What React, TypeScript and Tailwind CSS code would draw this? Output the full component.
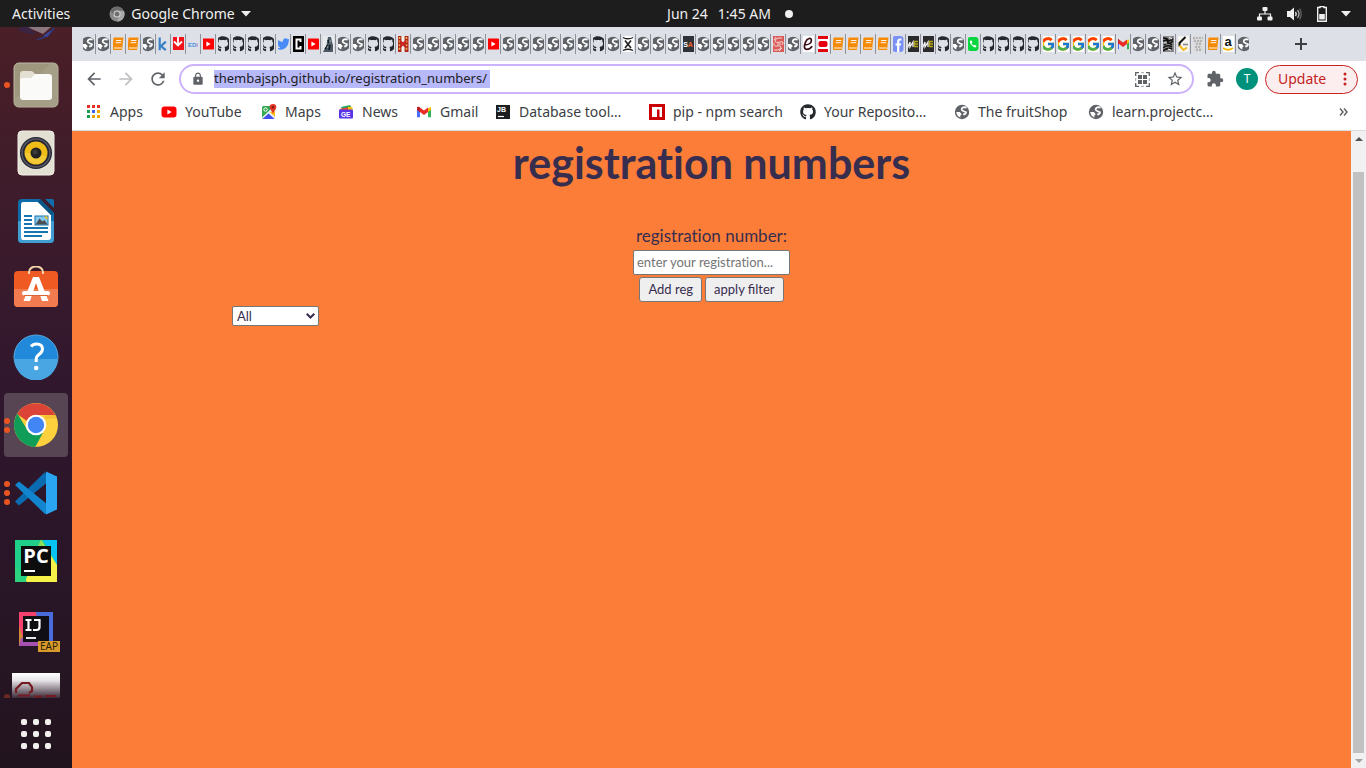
import type { ReactNode } from "react";
import {
  MdArrowBack,
  MdArrowForward,
  MdExtension,
  MdLock,
  MdRefresh,
  MdStarBorder,
} from "react-icons/md";
import { FaGithub, FaTwitter } from "react-icons/fa";
import { FcGoogle } from "react-icons/fc";

/* ---------- 16px site icons ---------- */

function Svg16({ children }: { children: ReactNode }) {
  return (
    <svg width="16" height="16" viewBox="0 0 16 16" className="shrink-0" aria-hidden="true">
      {children}
    </svg>
  );
}

const Globe = () => (
  <Svg16>
    <circle cx="8" cy="8" r="7.2" fill="#5f6368" />
    <path d="M12.6 3.6 10.200 3.200Q8 3.400 7.600 5.200 7.700 6.800 9.600 7.200L12 8.300Q11.800 10.300 9.200 10.400" fill="none" stroke="#fff" strokeWidth="1.700" />
    <path d="M2.200 8h3.600l2 2.300-1.600 1.500.3 1.700Q3 12.500 2.200 8z" fill="#fff" />
  </Svg16>
);
const Github = () => <FaGithub className="size-4 shrink-0 text-[#24292e]" />;
const Google = () => <FcGoogle className="size-4 shrink-0 bg-white" />;

const Book = () => (
  <Svg16>
    <path d="M4 1.500h9.500l-1.200 10H2.600L3.400 2.500z" fill="#f58a07" />
    <path d="M2.600 11h9.800l-.3 3H4q-2-.5-1.400-3z" fill="#f58a07" />
    <path d="M6 4.500h5.500M5.700 6.700h5.500M4 12h8" stroke="#fff" strokeWidth="0.900" />
  </Svg16>
);
const Youtube = () => (
  <Svg16>
    <rect x="0.5" y="2.6" width="15" height="11" rx="3" fill="#f00" />
    <path d="M6.4 5.5v5l4.2-2.5z" fill="#fff" />
  </Svg16>
);
const Kaggle = () => (
  <Svg16>
    <path d="M4.7 1.5v12.7M10.8 5.6 6 10.2l4.8 4" fill="none" stroke="#3a80c6" strokeWidth="2.2" />
  </Svg16>
);
const Download = () => (
  <Svg16>
    <rect x="2" y="1" width="12" height="13" fill="#f3131a" />
    <path d="M8 1v8M4 5.5 8 9.500l4-4" fill="none" stroke="#fff" strokeWidth="1.800" />
  </Svg16>
);
const Edi = () => (
  <Svg16>
    <text x="8" y="10.5" textAnchor="middle" fontSize="6" fontWeight="700" fill="#4b8fd8" fontFamily="Liberation Sans, sans-serif">
      ED<tspan fill="#c080d8">I</tspan>
    </text>
  </Svg16>
);
const Twitter = () => <FaTwitter className="size-[14px] shrink-0 text-[#4a8cf7]" />;
const Blocky = () => (
  <Svg16>
    <rect x="2" width="12" height="16" fill="#000" />
    <path d="M10.500 6V3.500H6.500v9h4V10" fill="none" stroke="#fff" strokeWidth="2" />
  </Svg16>
);
const Statue = () => (
  <Svg16>
    <rect width="16" height="16" fill="#e8eaec" />
    <path d="M8 1h3l1 5 1 3v7H3c1-2 1-3 3-4L7 6z" fill="#4c5964" />
    <path d="M8 4l1 3M5 13l3-4M10 9l-1 5" stroke="#11181f" strokeWidth="1.6" />
    <path d="M10 4v3M7 12l1-2" stroke="#b9c6ce" strokeWidth="0.8" />
  </Svg16>
);
const Plaid = () => (
  <Svg16>
    <path d="M4.5 0v16M11.5 0v16" stroke="#b3261e" strokeWidth="4" />
    <path d="M4.5 1v14M11.5 1v14" stroke="#e5b64a" strokeWidth="1.6" strokeDasharray="2 1.6" />
    <path d="M8 0v5M8 11v5" stroke="#f7f1e2" strokeWidth="2.4" />
    <path d="m5 5 6 6M11 5l-6 6" stroke="#c8201c" strokeWidth="2" />
  </Svg16>
);
const Hourglass = () => (
  <Svg16>
    <rect x="2" width="12" height="16" rx="3" fill="#fff" />
    <path d="M5 4.500 11 12M11 4.500 5 12" stroke="#222" strokeWidth="1.700" fill="none" />
    <path d="M3 1.500Q8 4 13 1.500M3 14.500q5-2.500 10 0" stroke="#222" strokeWidth="1.300" fill="none" />
  </Svg16>
);
const Sa = () => (
  <Svg16>
    <rect width="16" height="16" fill="#303238" />
    <text x="8" y="11" textAnchor="middle" fontSize="7" fontWeight="700" fill="#fff" fontFamily="Liberation Sans, sans-serif">
      S<tspan fill="#f0642d">A</tspan>
    </text>
  </Svg16>
);
const Swirl = () => (
  <Svg16>
    <rect width="16" height="16" fill="#d95a57" />
    <path d="M12 2H8Q5 3 5 5t5 1 2 3M4 14h4q3-1 3-3t-4-1-3-3M6 1 4 4m8 8-3 3M7 8h4" stroke="#f6d9d5" strokeWidth="1" fill="none" />
  </Svg16>
);
const ScriptE = () => (
  <Svg16>
    <rect width="16" height="16" fill="#fff" />
    <path d="M4.4 9c4 0 7-2 7-4.8 0-3-4.2-2-5.8 1.6-2 4.600-1.300 7.600 1.200 7.600 2 0 4-1.400 5.400-3.200" stroke="#3a0b16" strokeWidth="1.7" fill="none" />
  </Svg16>
);
const RedBars = () => (
  <Svg16>
    <rect width="16" height="16" fill="#fff" />
    <path d="M3 1.500h10M3 14.500h10" stroke="#e3000f" strokeWidth="3" />
    <rect x="3.500" y="5" width="9" height="6" rx="2" fill="#e3000f" />
  </Svg16>
);
const Facebook = () => (
  <Svg16>
    <rect x="2.500" width="11" height="16" rx="3" fill="#7a90f4" />
    <path d="M11.500 3.500h-1.300q-2 0-2 2V16M5.500 8.500h5.500" stroke="#fff" strokeWidth="2.200" fill="none" />
  </Svg16>
);
const Me = () => (
  <Svg16>
    <rect width="16" height="16" fill="#2b2b2b" />
    <path d="M2.500 12 5 6v5l3-5v5" stroke="#f2f2f2" strokeWidth="1.300" fill="none" />
    <path d="M13 5.500H9.500v5H13M9.500 8H13" stroke="#b5a81c" strokeWidth="1.300" fill="none" />
  </Svg16>
);
const Whatsapp = () => (
  <Svg16>
    <rect x="2.500" y="1" width="11" height="14" rx="3" fill="#08d63f" />
    <path d="M5.500 4.500q-1.500 1.500.5 4t4.500 3l1.200-1.500-2-1.300-1 .8Q7 8.500 6.600 7.300l.8-.8-.7-2z" fill="#fff" />
  </Svg16>
);
const Gmail = () => (
  <Svg16>
    <path d="M1 4.200v9h3V6.600z" fill="#4a6cf7" />
    <path d="M15 4.200v9h-3V6.600z" fill="#34b356" />
    <path d="M12 4.300 15 3v2.800l-3 2.200z" fill="#fbbc04" />
    <path d="M1 5.800V3.600Q2 2.300 3.500 3.200L8 6.600l4-3v4.400l-4 3-4-3z" fill="#ea2b26" />
    <path d="M1 3.700v2.200L4 8V3.600Q2 2 1 3.700z" fill="#bc1e2c" />
  </Svg16>
);
const Zebra = () => (
  <Svg16>
    <rect width="16" height="16" fill="#888" />
    <path d="M3 2q4 0 5 2t5-1M3 5q4-2 5 1t5-1M4 9q4-4 8 0M3 12q4-4 9-1M3 15q5-4 9-2" stroke="#111" strokeWidth="1.600" fill="none" />
    <path d="M9 1l3 2M4 7h3M8 13l3 1" stroke="#fff" />
  </Svg16>
);
const Leet = () => (
  <Svg16>
    <rect x="2" width="12" height="16" fill="#f6f4ef" />
    <path d="M10.500 1 4.500 7v3.500" stroke="#111" strokeWidth="2" fill="none" />
    <path d="M4.500 9.500 8.500 14l3.500-2.500" stroke="#f5b81c" strokeWidth="2" fill="none" />
    <path d="M8 8.500h5" stroke="#888" strokeWidth="1.600" />
  </Svg16>
);
const Mosaic = () => (
  <Svg16>
    <rect width="16" height="16" fill="#dcdcdc" />
    <path d="M3 2h10M4 5h8M6 8h6M5 11h6M6 14h6" stroke="#8c8c8c" strokeDasharray="2 1" />
    <path d="M4 1v6M10 4v11M7 6v8" stroke="#b5b5b5" strokeDasharray="1 1" />
  </Svg16>
);
const Amazon = () => (
  <Svg16>
    <rect width="16" height="16" fill="#fff" />
    <text x="8" y="10" textAnchor="middle" fontSize="13" fontWeight="700" fill="#111" fontFamily="Liberation Sans, sans-serif">
      a
    </text>
    <path d="M3 12q5 3.500 10 0" stroke="#f5b400" strokeWidth="1.800" fill="none" />
  </Svg16>
);
const JetBrains = () => (
  <Svg16>
    <rect x="1" y="1" width="14" height="14" fill="#1c1e20" />
    <text x="2" y="8" fontSize="7" fontWeight="700" fill="#fff" fontFamily="Liberation Sans, sans-serif">JB</text>
    <path d="M3 12.500h6" stroke="#fff" strokeWidth="1.200" />
  </Svg16>
);
const Npm = () => (
  <Svg16>
    <rect width="16" height="16" fill="#cb0000" />
    <path d="M3 3h10v10h-2.500V5.500H8V13H3z" fill="#fff" />
  </Svg16>
);
const AppsGrid = () => (
  <Svg16>
    {["#e53125", "#e53125", "#e53125", "#1a9e4b", "#3b67ef", "#eda500", "#1a9e4b", "#eda500", "#eda500"].map((c, i) => (
      <rect key={i} x={1 + (i % 3) * 5} y={1 + Math.floor(i / 3) * 5} width="3" height="3" fill={c} />
    ))}
  </Svg16>
);
const Maps = () => (
  <Svg16>
    <rect x="1" y="2" width="13" height="13" rx="1.500" fill="#34a853" />
    <path d="M1 13.500 11 4l3 3v8H2z" fill="#e8edf3" />
    <path d="m7.500 9.500 6 5.500h-12z" fill="#4050ef" />
    <path d="m9 8 5 5V7z" fill="#fbbc04" />
    <circle cx="4.500" cy="5.500" r="1.700" fill="none" stroke="#fff" />
    <path d="M12 0a3.300 3.300 0 0 0-3.300 3.300C8.700 5.500 11 6.500 12 10c1-3.500 3.300-4.500 3.300-6.700A3.300 3.300 0 0 0 12 0z" fill="#e33629" />
    <circle cx="12" cy="3.300" r="1.200" fill="#811a12" />
  </Svg16>
);
const News = () => (
  <Svg16>
    <path d="m3 3 9-2 2 4H4z" fill="#16a765" />
    <path d="m1.500 5 11-2.300 1 3-11 2z" fill="#ea4335" />
    <path d="m10 2.500 4.500 1V7H10z" fill="#fbbc04" />
    <rect x="1" y="5.500" width="14" height="9" rx="1" fill="#5a35e8" />
    <text x="3" y="12.500" fontSize="6.500" fontWeight="700" fill="#fff" fontFamily="Liberation Sans, sans-serif">GE</text>
  </Svg16>
);

/* ---------- tab strip ---------- */

const tabIcons: Record<string, () => ReactNode> = {
  g: Globe,
  b: Book,
  k: Kaggle,
  d: Download,
  i: Edi,
  y: Youtube,
  h: Github,
  t: Twitter,
  C: Blocky,
  s: Statue,
  p: Plaid,
  x: Hourglass,
  S: Sa,
  w: Swirl,
  e: ScriptE,
  r: RedBars,
  f: Facebook,
  m: Me,
  W: Whatsapp,
  G: Google,
  M: Gmail,
  z: Zebra,
  l: Leet,
  o: Mosaic,
  a: Amazon,
};
const tabs = "ggbbgkdiyhhhhtCysgghhpgggggygggggghgxgggSgggggwgerbbbbfmmhgWhhhhGGGGGMggzlobag".split("");

function TabStrip() {
  return (
    <div className="flex h-[34px] shrink-0 items-center bg-[#dee0e8] pl-[9px]">
      {tabs.map((t, i) => {
        const Icon = tabIcons[t];
        const last = i === tabs.length - 1;
        return (
          <div
            key={i}
            className={
              last
                ? "flex h-5 w-[15px] shrink-0 items-center justify-center"
                : "flex h-5 w-[15px] shrink-0 items-center justify-center border-r border-[#8f9198]"
            }
          >
            <span className="flex w-[11px] items-center justify-center overflow-hidden">
              <Icon />
            </span>
          </div>
        );
      })}
      <button aria-label="New tab" className="ml-10 flex size-5 items-center justify-center">
        <svg width="12" height="12" viewBox="0 0 12 12">
          <path d="M6 0v12M0 6h12" stroke="#3c4043" strokeWidth="2" />
        </svg>
      </button>
    </div>
  );
}

/* ---------- dock icons ---------- */

const Mail = () => (
  <svg width="46" height="14" viewBox="0 0 46 14">
    <path d="M14 0h24L30 7z" fill="#8b7680" />
    <path d="M4 2q9 6 19 5L16 0H8z" fill="#33264f" opacity=".7" />
    <path d="M23 12q10-1 17-11l2 0Q36 11 25 13z" fill="#2c3a80" />
    <path d="M30 9 38 3l-3 7z" fill="#3a4696" />
  </svg>
);
const Files = () => (
  <svg width="46" height="46" viewBox="0 0 46 46">
    <rect x="1" y="1" width="44" height="44" rx="5" fill="#9f967e" stroke="#bdb7a3" />
    <path d="M1 38 38 1h3q4 0 4 4v36q0 4-4 4H5q-4 0-4-4z" fill="#aaa28c" opacity=".7" />
    <rect x="7" y="12" width="32" height="26" rx="3" fill="#fafaf8" />
    <path d="M7 17v-5q0-3 3-3h8q2 0 4 3l-4 4h-8q-3 0-3 1z" fill="#e3dfd3" />
  </svg>
);
const Rhythmbox = () => (
  <svg width="46" height="46" viewBox="0 0 46 46">
    <rect x="5" y="1" width="36" height="44" rx="4" fill="#e2dfd3" stroke="#f2f0e8" />
    <circle cx="23" cy="23" r="16" fill="#242536" />
    <circle cx="23" cy="23" r="14" fill="none" stroke="#56575f" strokeWidth="1.500" />
    <circle cx="23" cy="23" r="11.500" fill="#efbd17" />
    <path d="M12 23a11.500 11.500 0 0 0 22 4L23 23z" fill="#f7cf45" opacity=".7" />
    <circle cx="23" cy="23" r="5.500" fill="#222" />
    <circle cx="22" cy="22" r="2.500" fill="#3b3b3b" />
  </svg>
);
const Writer = () => (
  <svg width="46" height="46" viewBox="0 0 46 46">
    <path d="M9 1h18l14 14v26q0 4-4 4H9q-4 0-4-4V5q0-4 4-4z" fill="#0d6ba8" />
    <path d="M5 23h36v18q0 4-4 4H9q-4 0-4-4z" fill="#3f9fd2" />
    <path d="M32 1h7q2 0 2 2v7z" fill="#136fa9" />
    <path d="M10 4h15l13 13v22q0 3-3 3H10q-2 0-2-3V7q0-3 2-3z" fill="#fff" />
    <path d="M25 4l13 13 3-2L27 1z" fill="#075687" />
    <path d="M11 18h8M11 22h8M11 26h8M11 30h24M11 34h24M11 38h18" stroke="#1576b0" strokeWidth="2" />
    <rect x="22" y="18" width="13" height="9" fill="#87c9ec" stroke="#1576b0" />
    <path d="m22.500 26.500 4-6 3 3 2-1.500 3 4.500z" fill="#4b4f52" />
    <path d="M31 18.500h3.500V22z" fill="#f5b922" />
  </svg>
);
const Software = () => (
  <svg width="46" height="46" viewBox="0 0 46 46">
    <rect x="1" y="5" width="44" height="36" rx="4" fill="#ef5a22" />
    <path d="M1 23h44v14q0 4-4 4H5q-4 0-4-4z" fill="#f27c4f" />
    <path d="M16 8V6a7 5.500 0 0 1 14 0v2" fill="none" stroke="#f3d6a8" strokeWidth="2" />
    <path d="M20 11h6l9.500 24H29l-6-18-6 18h-6.500z" fill="#fff" />
    <rect x="9" y="25" width="28" height="4.500" rx="2.200" fill="#fff" />
    <path d="M11 29.500h24" stroke="#d9633b" />
  </svg>
);
const Help = () => (
  <svg width="46" height="46" viewBox="0 0 46 46">
    <circle cx="23" cy="23" r="22" fill="#2089da" stroke="#59a9df" />
    <path d="M1.500 25a21.500 21.500 0 0 0 43 0z" fill="#4aa5e3" />
    <path d="M18 12.500q2-2.500 5.500-2.500 6 0 6 5 0 3-3.500 5.500-2.800 2-2.800 4.500v3" fill="none" stroke="#fff" strokeWidth="3" />
    <circle cx="23.200" cy="34" r="2.300" fill="#fff" />
  </svg>
);
const Chrome = () => (
  <svg width="46" height="46" viewBox="0 0 46 46">
    <circle cx="23" cy="23" r="22" fill="#fdd03e" />
    <path d="M4 12a22 22 0 0 1 38.300 1H23a10 10 0 0 0-9 6z" fill="#db4437" />
    <path d="M4.300 11.500a22 22 0 0 0 18 33.500l9.400-17.500a10 10 0 0 1-17.600 0z" fill="#0f9d58" />
    <path d="m32 13 10.500 0 1 3-11 1z" fill="#e8b32a" opacity=".5" />
    <circle cx="23" cy="23" r="10.300" fill="#fff" />
    <circle cx="23" cy="23" r="8.200" fill="#4285f4" />
  </svg>
);
const VsCode = () => (
  <svg width="46" height="46" viewBox="0 0 46 46">
    <path d="M2 31.500 32 2l4 9L6 35.500z" fill="#0b6bb0" />
    <path d="m2 15 4-3.500L34 34v9.500L32 44z" fill="#1285cf" />
    <path d="M33 1.500 44 6.500v33L33 44.500z" fill="#29a5f2" />
  </svg>
);
const PyCharm = () => (
  <svg width="46" height="46" viewBox="0 0 46 46">
    <rect x="2" y="2" width="42" height="42" fill="#20d08a" />
    <path d="M30 2h14v25z" fill="#07c3f2" />
    <path d="M28 2 12 44h32V27z" fill="#f7f24a" />
    <path d="M28 2 22 14l14 2z" fill="#8fdc5c" />
    <path d="M2 26 14 44H2z" fill="#2bd37e" />
    <rect x="8" y="8" width="30" height="30" fill="#0d0d0d" />
    <text x="23" y="25" textAnchor="middle" fontSize="20" fontWeight="700" fill="#fff" fontFamily="Open Sans, Noto Sans, sans-serif">PC</text>
    <path d="M11 33h11" stroke="#fff" strokeWidth="2" />
  </svg>
);
const Idea = () => (
  <svg width="48" height="46" viewBox="0 0 48 46">
    <rect x="7" y="6" width="34" height="34" fill="#f5416d" />
    <path d="M24 6h17v34H30z" fill="#4a6bdc" />
    <path d="M7 20 14 40H7z" fill="#d28a35" />
    <path d="M9 32 24 30l6 10H7z" fill="#a650b0" />
    <rect x="11" y="10" width="26" height="26" fill="#101014" />
    <path d="M13.500 14h6M13.500 24h6M16.500 14v10M22 14h5.500v7q0 3-3 3H21" stroke="#fff" strokeWidth="2.200" fill="none" />
    <path d="M14 32h10" stroke="#fff" strokeWidth="1.800" />
    <rect x="26" y="35" width="22" height="11" fill="#d79a2b" />
    <text x="37" y="44.300" textAnchor="middle" fontSize="10" fill="#2b1d08" fontFamily="Noto Sans, sans-serif">EAP</text>
  </svg>
);
const Signature = () => (
  <svg width="48" height="25" viewBox="0 0 48 25">
    <defs>
      <linearGradient id="fade" x1="0" y1="0" x2="0" y2="1">
        <stop offset="0" stopColor="#fff" />
        <stop offset="0.3" stopColor="#e6e3e6" />
        <stop offset="1" stopColor="#3b2a38" />
      </linearGradient>
    </defs>
    <rect width="48" height="25" fill="url(#fade)" />
    <path d="M4 20v-4l4-4 2-2h7l3 4v4l-3 2M6 22.500h12M22 23.500h8M33 23h11" stroke="#741a22" strokeWidth="2.200" fill="none" />
  </svg>
);

const dockItems: { name: string; icon: () => ReactNode; dots: number; active?: boolean }[] = [
  { name: "Files", icon: Files, dots: 1 },
  { name: "Rhythmbox", icon: Rhythmbox, dots: 0 },
  { name: "LibreOffice Writer", icon: Writer, dots: 0 },
  { name: "Ubuntu Software", icon: Software, dots: 0 },
  { name: "Help", icon: Help, dots: 0 },
  { name: "Google Chrome", icon: Chrome, dots: 2, active: true },
  { name: "Visual Studio Code", icon: VsCode, dots: 3 },
  { name: "PyCharm", icon: PyCharm, dots: 0 },
  { name: "IntelliJ IDEA", icon: Idea, dots: 0 },
];

function Dock() {
  return (
    <nav aria-label="Dock" className="flex w-[72px] shrink-0 flex-col items-center overflow-hidden bg-linear-to-b from-[#4a1f27] via-[#30172e] to-[#22141f]">
      <button aria-label="Thunderbird" className="flex h-6 shrink-0 items-start">
        <Mail />
      </button>
      {dockItems.map(({ name, icon: Icon, dots, active }) => (
        <div key={name} className="flex h-[68px] w-full shrink-0 items-center justify-center">
          <button
            aria-label={name}
            className={
              active
                ? "relative flex size-16 items-center justify-center rounded-sm bg-[#574553]"
                : "relative flex size-16 items-center justify-center rounded-sm"
            }
          >
            <span className="absolute left-0 flex h-full w-1.5 flex-col items-center justify-center gap-[3px]">
              {Array.from({ length: dots }, (_, i) => (
                <span key={i} className="size-1.5 shrink-0 rounded-full bg-[#e95420]" />
              ))}
            </span>
            <Icon />
          </button>
        </div>
      ))}
      <button aria-label="Signature" className="relative mt-2.5 flex w-full shrink-0 justify-center">
        <span className="absolute bottom-0 left-1 h-1 w-1.5 rounded-t-full bg-[#6b2a20]" />
        <Signature />
      </button>
      <button aria-label="Show Applications" className="mt-[21px] grid shrink-0 grid-cols-3 gap-1.5">
        {Array.from({ length: 9 }, (_, i) => (
          <span key={i} className="size-1.5 rounded-[2px] bg-[#f2f1ee]" />
        ))}
      </button>
    </nav>
  );
}

/* ---------- desktop top bar ---------- */

function TopBar() {
  return (
    <header className="grid h-[27px] shrink-0 grid-cols-[1fr_auto_1fr] items-center bg-[#1d1d1d] text-sm text-[#f0f0f0]">
      <div className="flex items-center pl-3">
        <button>Activities</button>
        <button className="ml-[39px] flex items-center gap-1.5">
          <svg width="16" height="16" viewBox="0 0 16 16">
            <circle cx="8" cy="8" r="7.500" fill="#8a8a8a" />
            <path d="M1.500 4.500A7.500 7.500 0 0 1 14.500 4.500H8L4.500 9z" fill="#6c6c6c" />
            <path d="M8 15.500A7.500 7.500 0 0 0 15 5H11v4z" fill="#a8a8a8" />
            <circle cx="8" cy="8" r="3.500" fill="#d8d8d8" />
            <circle cx="8" cy="8" r="2.500" fill="#6f6f6f" />
          </svg>
          <span>Google Chrome</span>
          <svg width="10" height="6" viewBox="0 0 10 6">
            <path d="M0 0h10L5 5.500z" fill="#f0f0f0" />
          </svg>
        </button>
      </div>
      <div className="flex items-center pl-[94px]">
        <span>Jun 24</span>
        <span className="ml-2.5">1:45 AM</span>
        <span className="ml-3.5 size-2 rounded-full bg-[#f0f0f0]" />
      </div>
      <div className="flex items-center justify-end gap-3.5 pr-[15px]">
        <svg width="16" height="14" viewBox="0 0 16 14" fill="#f0f0f0">
          <rect x="5.500" width="5" height="4" rx="1" />
          <rect y="9.500" width="5" height="4" rx="1" />
          <rect x="10.500" y="9.500" width="5" height="4" rx="1" />
          <path d="M8 4v3M2.500 10V7h11v3" fill="none" stroke="#f0f0f0" strokeWidth="1.200" />
        </svg>
        <svg width="16" height="14" viewBox="0 0 16 14">
          <path d="M0 4h3l4-3.500v13L3 10H0z" fill="#f0f0f0" />
          <path d="M8.500 5q1.500 2 0 4" fill="none" stroke="#f0f0f0" strokeWidth="1.300" />
          <path d="M10.500 3.200q3 3.800 0 7.600" fill="none" stroke="#b0b0b0" strokeWidth="1.300" />
          <path d="M12.500 1.700q3.500 5.300 0 10.600" fill="none" stroke="#666" strokeWidth="1.200" />
        </svg>
        <svg width="10" height="16" viewBox="0 0 10 16">
          <path d="M3 1.500V.5h4v1h2.300v13.700H.7V1.500z" fill="none" stroke="#f0f0f0" strokeWidth="1.400" />
          <rect x="2.200" y="8" width="5.600" height="5.500" fill="#f0f0f0" />
        </svg>
        <svg width="10" height="6" viewBox="0 0 10 6">
          <path d="M0 0h10L5 5.500z" fill="#f0f0f0" />
        </svg>
      </div>
    </header>
  );
}

/* ---------- browser ---------- */

function Toolbar() {
  return (
    <div className="flex h-9 shrink-0 items-center bg-white pr-2 pl-3 text-[#5f6368]">
      <button aria-label="Back" className="mr-3">
        <MdArrowBack className="size-5" />
      </button>
      <button aria-label="Forward" className="mr-3 text-[#bdbfc2]">
        <MdArrowForward className="size-5" />
      </button>
      <button aria-label="Reload" className="mr-[11px]">
        <MdRefresh className="size-5" />
      </button>
      <div className="flex h-[30px] min-w-0 flex-1 items-center rounded-full border-2 border-[#cbb2fb] pr-2 pl-2.5">
        <MdLock className="mr-[9px] size-[14px]" />
        <div className="flex flex-1 items-center">
          <input
            aria-label="Address"
            readOnly
            size={1}
            value="thembajsph.github.io/registration_numbers/"
            className="h-[18px] w-[276px] bg-[#b8b9fb] text-[13px] text-[#202124] outline-none"
          />
        </div>
        <button aria-label="QR code" className="mr-4">
          <svg width="15" height="15" viewBox="0 0 15 15">
            <path d="M.7 4V.7H4M11 .7h3.300V4M14.300 11v3.300H11M4 14.300H.7V11" fill="none" stroke="#5f6368" strokeWidth="1.300" />
            <path d="M6 .7h3M14.300 6v3M9 14.300H6M.7 9V6" fill="none" stroke="#a0a3a7" />
            <path d="M3 3h4v4H3zM8 3h4v4H8zM3 8h4v4H3zM8 8h4v4H8z" fill="#5f6368" />
          </svg>
        </button>
        <button aria-label="Bookmark this page">
          <MdStarBorder className="size-[18px]" />
        </button>
      </div>
      <button aria-label="Extensions" className="ml-3">
        <MdExtension className="size-[18px]" />
      </button>
      <button aria-label="Profile" className="ml-3 flex size-[22px] items-center justify-center rounded-full bg-[#00917c] text-xs text-white">
        T
      </button>
      <button className="ml-[7px] flex h-[29px] w-[93px] items-center justify-between rounded-full border border-[#c5221f] bg-[#fceeee] pr-2.5 pl-3 text-sm text-[#c5221f]">
        Update
        <svg width="4" height="14" viewBox="0 0 4 14" fill="#c5221f">
          <circle cx="2" cy="2" r="1.500" />
          <circle cx="2" cy="7" r="1.500" />
          <circle cx="2" cy="12" r="1.500" />
        </svg>
      </button>
    </div>
  );
}

const bookmarks: { label: string; icon: () => ReactNode; width: string }[] = [
  { label: "Apps", icon: AppsGrid, width: "w-[75px]" },
  { label: "YouTube", icon: Youtube, width: "w-[100px]" },
  { label: "Maps", icon: Maps, width: "w-[77px]" },
  { label: "News", icon: News, width: "w-[78px]" },
  { label: "Gmail", icon: Gmail, width: "w-[79px]" },
  { label: "Database tool…", icon: JetBrains, width: "w-[154px]" },
  { label: "pip - npm search", icon: Npm, width: "w-[151px]" },
  { label: "Your Reposito…", icon: Github, width: "w-[154px]" },
  { label: "The fruitShop", icon: Globe, width: "w-[134px]" },
  { label: "learn.projectc…", icon: Globe, width: "w-[140px]" },
];

function BookmarksBar() {
  return (
    <div className="flex h-[34px] shrink-0 items-center border-b border-[#dadce0] bg-white pb-1 pl-3.5 text-[#3c4043]">
      {bookmarks.map(({ label, icon: Icon, width }) => (
        <a key={label} href="#" className={`flex shrink-0 items-center gap-2 text-sm whitespace-nowrap ${width}`}>
          <Icon />
          {label}
        </a>
      ))}
      <button aria-label="More bookmarks" className="mr-[18px] ml-auto">
        <svg width="9" height="8" viewBox="0 0 9 8">
          <path d="m1 .5 3 3.500-3 3.500M5 .5l3 3.500-3 3.500" fill="none" stroke="#5f6368" strokeWidth="1.500" />
        </svg>
      </button>
    </div>
  );
}

function Page() {
  return (
    <main className="flex-1 overflow-hidden bg-[#fc7d37] font-['Lato',sans-serif] text-[#372d4f]">
      <h1 className="pt-2 text-center text-[43px] leading-12 font-bold [font-variant-ligatures:none]">registration numbers</h1>
      <form className="mt-[38px] flex flex-col items-center" onSubmit={(e) => e.preventDefault()}>
        <label htmlFor="reg" className="text-[17px] leading-[22px] [font-variant-ligatures:none]">
          registration number:
        </label>
        <input
          id="reg"
          type="text"
          placeholder="enter your registration..."
          className="mt-[3px] h-[25px] w-[157px] rounded-[2px] border border-[#767676] bg-white px-[3px] pb-0.5 text-[13px] [font-variant-ligatures:none] placeholder:text-[#757575]"
        />
        <div className="mt-0.5 flex gap-[3px]">
          <button type="button" className="h-[25px] rounded-[3px] border border-[#767676] bg-[#efefef] px-2 text-[13px]">
            Add reg
          </button>
          <button type="button" className="h-[25px] rounded-[3px] border border-[#767676] bg-[#efefef] px-2 text-[13px]">
            apply filter
          </button>
        </div>
      </form>
      <div className="relative mt-1 ml-[12.5%] flex w-[87px] items-center">
        <select aria-label="Filter by town" className="h-5 w-full appearance-none rounded-[2px] border border-[#767676] bg-white pl-1 text-[13px] leading-4">
          <option>All</option>
        </select>
        <svg width="9" height="6" viewBox="0 0 9 6" className="pointer-events-none absolute right-1">
          <path d="m.7.8 3.800 3.700L8.300.8" fill="none" stroke="#372d4f" strokeWidth="2" />
        </svg>
      </div>
    </main>
  );
}

function Scrollbar() {
  return (
    <div className="flex w-[15px] shrink-0 flex-col items-center bg-[#f1f1f1]">
      <div className="flex h-[41px] shrink-0 items-start pt-1.5">
        <svg width="8" height="4" viewBox="0 0 8 4">
          <path d="m0 4 4-4 4 4z" fill="#505050" />
        </svg>
      </div>
      <div className="w-[11px] flex-1 bg-[#c1c1c1]" />
      <div className="flex h-[15px] shrink-0 items-center">
        <svg width="8" height="4" viewBox="0 0 8 4">
          <path d="m0 0 4 4 4-4z" fill="#a3a3a3" />
        </svg>
      </div>
    </div>
  );
}

export default function App() {
  return (
    <div className="flex h-screen flex-col overflow-hidden font-['Noto_Sans',sans-serif]">
      <TopBar />
      <div className="flex min-h-0 flex-1">
        <Dock />
        <div className="flex min-w-0 flex-1 flex-col">
          <TabStrip />
          <Toolbar />
          <BookmarksBar />
          <div className="flex min-h-0 flex-1">
            <Page />
            <Scrollbar />
          </div>
        </div>
      </div>
    </div>
  );
}
